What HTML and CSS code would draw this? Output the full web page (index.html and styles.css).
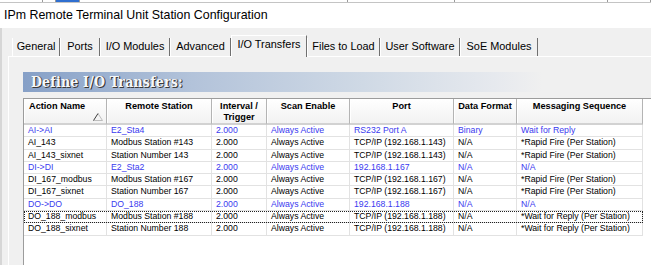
FILE: index.html
```html
<!DOCTYPE html>
<html lang="en">
<head>
  <meta charset="UTF-8">
  <meta name="viewport" content="width=device-width, initial-scale=1.0">
  <title>IPm Remote Terminal Unit Station Configuration</title>
  <link rel="stylesheet" href="styles.css">
</head>
<body>
  <div class="topstrip">
    <span></span><span></span><span class="picked"></span><span></span><span></span><span></span><span></span>
  </div>
  <div class="titlebar">IPm Remote Terminal Unit Station Configuration</div>

  <div class="dialog">
    <nav class="tabs">
      <span class="tab">General</span>
      <span class="tab">Ports</span>
      <span class="tab">I/O Modules</span>
      <span class="tab">Advanced</span>
      <span class="tab active">I/O Transfers</span>
      <span class="tab">Files to Load</span>
      <span class="tab">User Software</span>
      <span class="tab">SoE Modules</span>
    </nav>

    <section class="panel">
      <div class="banner">Define I/O Transfers:</div>
      <div class="grid">
        <table class="transfers">
          <colgroup>
            <col class="c-name"><col class="c-station"><col class="c-interval"><col class="c-scan">
            <col class="c-port"><col class="c-format"><col class="c-seq">
          </colgroup>
          <thead>
            <tr>
              <th class="sorted">
                <span>Action Name</span>
                <svg class="sort-arrow" width="10" height="8" viewBox="0 0 10 8">
                  <polyline points="5,0.5 9.5,7.5 0.5,7.5" fill="none" stroke="#bdbdbd" stroke-width="1"/>
                  <line x1="0.5" y1="7.5" x2="5" y2="0.5" stroke="#3c3c3c" stroke-width="1"/>
                </svg>
              </th>
              <th>Remote Station</th>
              <th>Interval /<br>Trigger</th>
              <th>Scan Enable</th>
              <th>Port</th>
              <th>Data Format</th>
              <th>Messaging Sequence</th>
            </tr>
          </thead>
          <tbody>
            <tr class="link">
              <td>AI-&gt;AI</td><td>E2_Sta4</td><td>2.000</td><td>Always Active</td><td>RS232 Port A</td><td>Binary</td><td>Wait for Reply</td>
            </tr>
            <tr>
              <td>AI_143</td><td>Modbus Station #143</td><td>2.000</td><td>Always Active</td><td>TCP/IP (192.168.1.143)</td><td>N/A</td><td>*Rapid Fire (Per Station)</td>
            </tr>
            <tr>
              <td>AI_143_sixnet</td><td>Station Number 143</td><td>2.000</td><td>Always Active</td><td>TCP/IP (192.168.1.143)</td><td>N/A</td><td>*Rapid Fire (Per Station)</td>
            </tr>
            <tr class="link">
              <td>DI-&gt;DI</td><td>E2_Sta2</td><td>2.000</td><td>Always Active</td><td>192.168.1.167</td><td>N/A</td><td>N/A</td>
            </tr>
            <tr>
              <td>DI_167_modbus</td><td>Modbus Station #167</td><td>2.000</td><td>Always Active</td><td>TCP/IP (192.168.1.167)</td><td>N/A</td><td>*Rapid Fire (Per Station)</td>
            </tr>
            <tr>
              <td>DI_167_sixnet</td><td>Station Number 167</td><td>2.000</td><td>Always Active</td><td>TCP/IP (192.168.1.167)</td><td>N/A</td><td>*Rapid Fire (Per Station)</td>
            </tr>
            <tr class="link">
              <td>DO-&gt;DO</td><td>DO_188</td><td>2.000</td><td>Always Active</td><td>192.168.1.188</td><td>N/A</td><td>N/A</td>
            </tr>
            <tr class="focus">
              <td>DO_188_modbus</td><td>Modbus Station #188</td><td>2.000</td><td>Always Active</td><td>TCP/IP (192.168.1.188)</td><td>N/A</td><td>*Wait for Reply (Per Station)</td>
            </tr>
            <tr>
              <td>DO_188_sixnet</td><td>Station Number 188</td><td>2.000</td><td>Always Active</td><td>TCP/IP (192.168.1.188)</td><td>N/A</td><td>*Wait for Reply (Per Station)</td>
            </tr>
          </tbody>
        </table>
      </div>
    </section>
  </div>
</body>
</html>
```

FILE: styles.css
```css
body {
  margin: 0;
  width: 651px;
  height: 265px;
  overflow: hidden;
  display: flex;
  flex-direction: column;
  font-family: 'Liberation Sans', Arial, sans-serif;
  color: #000;
  background: #fff;
}
.topstrip {
  display: grid;
  grid-template-columns: 43px 13px 24px 268px 107px 153px 43px;
  height: 2px;
  border-bottom: 1px solid #c4c4c4;
}
.topstrip span {
  border-right: 1px solid #9a9a9a;
}
.topstrip .picked {
  background: #2f6fd0;
}
.titlebar {
  height: 25px;
  line-height: 25px;
  padding-left: 4px;
  font-size: 12.4px;
  white-space: nowrap;
}
.dialog {
  flex: 1;
  display: flex;
  flex-direction: column;
  background: #f0f0f0;
  border-left: 2px solid #d6d6d6;
  padding-left: 6px;
  min-height: 0;
}
.tabs {
  display: grid;
  grid-template-columns: 48px 40px 70px 61px 76px 73px 80px 78px;
  align-items: end;
  padding: 7px 0 0 4px;
  font-size: 10.9px;
}
.tab {
  height: 18px;
  line-height: 16px;
  text-align: center;
  white-space: nowrap;
  border-left: 1px solid #fff;
  border-right: 1px solid #707070;
  box-sizing: border-box;
}
.tab.active {
  position: relative;
  z-index: 1;
  height: 22px;
  line-height: 17px;
  margin-bottom: -1px;
  border-top: 1px solid #fff;
  background: #f0f0f0;
}
.panel {
  flex: 1;
  display: flex;
  flex-direction: column;
  border-top: 1px solid #fff;
  border-left: 1px solid #fff;
  padding: 15px 0 0 14px;
  min-height: 0;
}
.banner {
  height: 20px;
  line-height: 21px;
  padding-left: 8px;
  background: linear-gradient(to right, #86a0c7 0, #b3c3da 170px, #cfd9e5 340px, #e6e9ee 470px, #f0f0f0 520px);
  font-family: 'DejaVu Serif Condensed', 'DejaVu Serif', serif;
  font-weight: bold;
  font-size: 14px;
  letter-spacing: 0.2px;
  color: #f6f7fa;
  text-shadow: 1px 1px 0 #3a3a3a, 1px 0 0 #5a5a5a;
  white-space: nowrap;
}
.grid {
  flex: 1;
  margin-top: 6px;
  background: #fff;
  border-left: 1px solid #9c9c9c;
  border-top: 1px solid #9c9c9c;
}
.transfers {
  table-layout: fixed;
  width: 619px;
  border-spacing: 0;
  font-size: 8.7px;
}
.c-name { width: 83px; }
.c-station { width: 105px; }
.c-interval { width: 55px; }
.c-scan { width: 83px; }
.c-port { width: 104px; }
.c-format { width: 63px; }
.c-seq { width: 126px; }
.transfers th {
  height: 22px;
  padding: 2px 0 0;
  vertical-align: top;
  font-size: 9.2px;
  line-height: 11px;
  font-weight: bold;
  text-align: center;
  background: linear-gradient(#ffffff, #f2f2f2);
  border-right: 1px solid #b4b4b4;
  border-bottom: 2px solid #d2d2d2;
  box-shadow: inset 1px 0 #fff;
  white-space: nowrap;
}
.transfers th.sorted {
  text-align: left;
  padding-left: 5px;
}
.sort-arrow {
  display: block;
  margin: 1px 0 0 64px;
}
.transfers td {
  padding: 0 0 0 4px;
  line-height: 11.3px;
  border-right: 1px solid #e2e2e2;
  border-bottom: 1px solid #e2e2e2;
  white-space: nowrap;
  overflow: hidden;
}
.transfers tr.link td {
  color: #3a3aef;
}
.transfers tr.focus {
  outline: 1px dotted #222;
  outline-offset: -1px;
}
```
